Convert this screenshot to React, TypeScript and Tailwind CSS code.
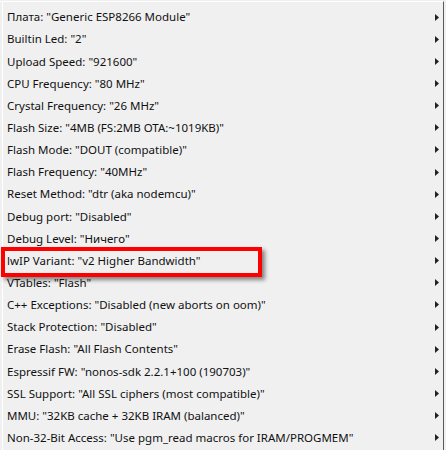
const items = [
  'Плата: "Generic ESP8266 Module"',
  'Builtin Led: "2"',
  'Upload Speed: "921600"',
  'CPU Frequency: "80 MHz"',
  'Crystal Frequency: "26 MHz"',
  'Flash Size: "4MB (FS:2MB OTA:~1019KB)"',
  'Flash Mode: "DOUT (compatible)"',
  'Flash Frequency: "40MHz"',
  'Reset Method: "dtr (aka nodemcu)"',
  'Debug port: "Disabled"',
  'Debug Level: "Ничего"',
  'lwIP Variant: "v2 Higher Bandwidth"',
  'VTables: "Flash"',
  'C++ Exceptions: "Disabled (new aborts on oom)"',
  'Stack Protection: "Disabled"',
  'Erase Flash: "All Flash Contents"',
  'Espressif FW: "nonos-sdk 2.2.1+100 (190703)"',
  'SSL Support: "All SSL ciphers (most compatible)"',
  'MMU: "32KB cache + 32KB IRAM (balanced)"',
  'Non-32-Bit Access: "Use pgm_read macros for IRAM/PROGMEM"',
];

const Arrow = () => (
  <svg width="4" height="7" viewBox="0 0 4 7" className="shrink-0">
    <path d="M0 0 L4 3.5 L0 7 Z" fill="#222" />
  </svg>
);

export default function App() {
  return (
    <div className="w-[446px] h-[450px] bg-[#f0f0f0] overflow-hidden pt-px text-black font-['Noto_Sans','Open_Sans',sans-serif] text-[11.5px]">
      <div className="w-[444px] h-[460px] border-t border-t-white border-r border-r-[#5a5a5a] pl-[2px]">
        <div className="h-full border-l border-l-white pt-[4px] pl-[4px] pr-[4px]">
          {items.map((label, i) => (
            <div key={label} className="relative flex items-center justify-between h-[22.15px]">
              <span className="whitespace-nowrap leading-none text-[#111]">{label}</span>
              <Arrow />
              {i === 11 && (
                <div className="absolute left-[-6px] top-[-3px] w-[261px] h-[30px] border-4 border-[#ff0000] shadow-[3px_3px_4px_rgba(0,0,0,0.45)] pointer-events-none" />
              )}
            </div>
          ))}
        </div>
      </div>
    </div>
  );
}
